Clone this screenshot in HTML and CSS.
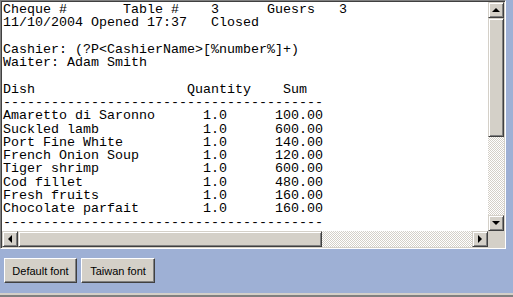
FILE: index.html
```html
<!DOCTYPE html>
<html lang="en">
  <head>
    <link rel="stylesheet" href="styles.css">
  </head>
  <body>
    <div class="memo">
      <div class="memo-body">
        <pre class="cheque">Cheque #       Table #    3      Guesrs   3
11/10/2004 Opened 17:37   Closed

Cashier: (?P&lt;CashierName&gt;[%number%]+)
Waiter: Adam Smith

Dish                   Quantity    Sum
----------------------------------------
Amaretto di Saronno      1.0      100.00
Suckled lamb             1.0      600.00
Port Fine White          1.0      140.00
French Onion Soup        1.0      120.00
Tiger shrimp             1.0      600.00
Cod fillet               1.0      480.00
Fresh fruits             1.0      160.00
Chocolate parfait        1.0      160.00
----------------------------------------</pre>
        <div class="vscroll">
          <div class="sb-btn"><span class="arrow up"></span></div>
          <div class="sb-thumb v-thumb"></div>
          <div class="sb-track"></div>
          <div class="sb-btn"><span class="arrow down"></span></div>
        </div>
      </div>
      <div class="hscroll">
        <div class="sb-btn"><span class="arrow left"></span></div>
        <div class="sb-thumb h-thumb"></div>
        <div class="sb-track"></div>
        <div class="sb-btn"><span class="arrow right"></span></div>
        <div class="sb-corner"></div>
      </div>
    </div>

    <div class="buttons">
      <button class="font-btn">Default font</button>
      <button class="font-btn">Taiwan font</button>
    </div>

    <div class="bottom-edge"></div>
  </body>
</html>
```

FILE: styles.css
```css
body {
  margin: 0;
  padding: 0;
  width: 513px;
  height: 297px;
  background-color: #9eb0d5;
  display: flex;
  flex-direction: column;
  overflow: hidden;
}

/* memo box with classic sunken frame */
div.memo {
  width: 502px;
  height: 245px;
  border: 1px solid;
  border-color: #808080 #ffffff #ffffff #808080;
  box-shadow: inset 1px 1px 0 #404040, inset -1px -1px 0 #d4d0c8;
  padding: 1px;
  background-color: #ffffff;
  display: flex;
  flex-direction: column;
}

div.memo-body {
  display: flex;
  height: 229px;
}

pre.cheque {
  flex: 1;
  margin: 0;
  padding: 1px 1px;
  font-family: "Liberation Mono", "Courier New", monospace;
  font-size: 13.33px;
  line-height: 13.28px;
  color: #000000;
  overflow: hidden;
}

div.vscroll {
  width: 16px;
  display: flex;
  flex-direction: column;
}

div.hscroll {
  height: 16px;
  display: flex;
}

.sb-btn {
  width: 16px;
  height: 16px;
  box-sizing: border-box;
  background-color: #d4d0c8;
  border: 1px solid;
  border-color: #d4d0c8 #404040 #404040 #d4d0c8;
  box-shadow: inset 1px 1px 0 #ffffff, inset -1px -1px 0 #808080;
  display: flex;
  justify-content: center;
  align-items: center;
  flex-shrink: 0;
}

.sb-thumb {
  box-sizing: border-box;
  background-color: #d4d0c8;
  border: 1px solid;
  border-color: #d4d0c8 #404040 #404040 #d4d0c8;
  box-shadow: inset 1px 1px 0 #ffffff, inset -1px -1px 0 #808080;
  flex-shrink: 0;
}

.v-thumb {
  height: 119px;
}

.h-thumb {
  width: 304px;
}

.sb-track {
  flex: 1;
  background: repeating-conic-gradient(#d4d0c8 0 25%, #ffffff 0 50%) 0 0 / 2px 2px;
}

.sb-corner {
  width: 16px;
  background-color: #d4d0c8;
}

.arrow {
  width: 0;
  height: 0;
  border-style: solid;
}

.arrow.up {
  border-width: 0 4px 4px 4px;
  border-color: transparent transparent #000000 transparent;
}

.arrow.down {
  border-width: 4px 4px 0 4px;
  border-color: #000000 transparent transparent transparent;
}

.arrow.left {
  border-width: 4px 4px 4px 0;
  border-color: transparent #000000 transparent transparent;
}

.arrow.right {
  border-width: 4px 0 4px 4px;
  border-color: transparent transparent transparent #000000;
}

div.buttons {
  display: flex;
  gap: 4px;
  padding: 9px 0 0 4px;
  height: 25px;
}

button.font-btn {
  height: 25px;
  margin: 0;
  padding: 0;
  font-family: "Liberation Sans", Arial, sans-serif;
  font-size: 11px;
  color: #000000;
  background-color: #d4d0c8;
  border: 1px solid;
  border-color: #ffffff #404040 #404040 #ffffff;
  box-shadow: inset -1px -1px 0 #808080;
}

button.font-btn:first-child {
  width: 73px;
}

button.font-btn:last-child {
  width: 74px;
}

div.bottom-edge {
  margin-top: auto;
  height: 2px;
  border-top: 2px solid #d4d0c8;
  background-color: #808080;
}
```
